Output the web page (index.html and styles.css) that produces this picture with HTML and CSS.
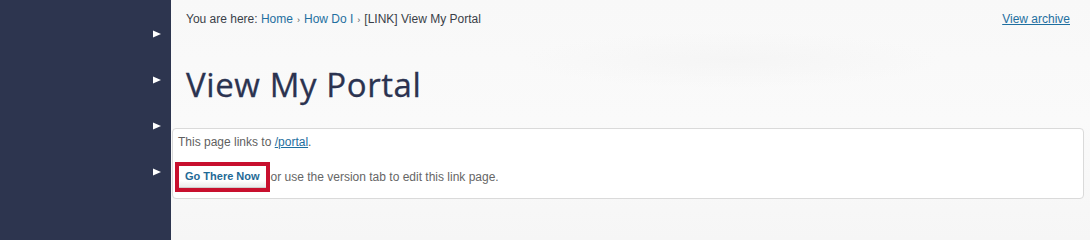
FILE: index.html
```html
<!DOCTYPE html>
<html>
<head>
<meta charset="utf-8">
<link rel="stylesheet" href="styles.css">
</head>
<body>
<div class="page">
  <nav class="sidebar">
    <svg class="arrow" width="8" height="8" viewBox="0 0 8 8"><path d="M0 0.5 L8 4 L0 7.5 Z" fill="#ffffff"/></svg>
    <svg class="arrow" width="8" height="8" viewBox="0 0 8 8"><path d="M0 0.5 L8 4 L0 7.5 Z" fill="#ffffff"/></svg>
    <svg class="arrow" width="8" height="8" viewBox="0 0 8 8"><path d="M0 0.5 L8 4 L0 7.5 Z" fill="#ffffff"/></svg>
    <svg class="arrow" width="8" height="8" viewBox="0 0 8 8"><path d="M0 0.5 L8 4 L0 7.5 Z" fill="#ffffff"/></svg>
  </nav>
  <main class="main">
    <div class="topbar">
      <div class="crumbs">You are here: <a href="#">Home</a><span class="sep">›</span><a href="#">How Do I</a><span class="sep">›</span>[LINK] View My Portal</div>
      <a class="archive" href="#">View archive</a>
    </div>
    <h1 class="title">View My Portal</h1>
    <div class="box">
      <p class="line1">This page links to <a href="#">/portal</a>.</p>
      <div class="line2">
        <span class="btn-wrap"><button class="btn">Go There Now</button></span>
        <span class="note">or use the version tab to edit this link page.</span>
      </div>
    </div>
  </main>
</div>
</body>
</html>
```

FILE: styles.css
```css
html, body {
  margin: 0;
  padding: 0;
  height: 100%;
}
body {
  font-family: "Liberation Sans", Arial, sans-serif;
  background: #f7f7f7;
  overflow: hidden;
}
.page {
  display: flex;
  min-height: 100vh;
}
.sidebar {
  width: 171px;
  flex: none;
  background: #2d354f;
  display: flex;
  flex-direction: column;
  align-items: flex-end;
  padding-top: 30px;
  padding-right: 10px;
  box-sizing: border-box;
  gap: 38px;
}
.arrow {
  display: block;
  flex: none;
}
.main {
  flex: 1;
  padding: 0 6px 0 1px;
  background:
    radial-gradient(ellipse 300px 40px at 560px 60px, rgba(238,238,238,0.35), rgba(255,255,255,0) 70%),
    linear-gradient(180deg, #f8f8f8 0%, #fafafa 50%, #f6f6f6 100%);
}
.topbar {
  display: flex;
  justify-content: space-between;
  align-items: baseline;
  padding: 12px 14px 0 14px;
  font-size: 12px;
  line-height: 14px;
}
.crumbs {
  color: #3a3f48;
}
.crumbs a {
  color: #1f6fa0;
  text-decoration: none;
}
.sep {
  font-size: 9px;
  color: #555;
  margin: 0 4px;
}
.archive {
  color: #1f6fa0;
  text-decoration: underline;
  font-size: 12px;
}
.title {
  margin: 38px 0 0 0;
  padding: 0 0 0 14px;
  font-family: "Open Sans", "Noto Sans", sans-serif;
  font-weight: 400;
  font-size: 33px;
  line-height: 40px;
  color: #2b3350;
  letter-spacing: 0.6px;
  -webkit-text-stroke: 0.3px #2b3350;
}
.box {
  margin-top: 23px;
  background: #ffffff;
  border: 1px solid #dadada;
  border-radius: 4px;
  padding: 6px 6px 4px 5px;
  height: 71px;
  box-sizing: border-box;
}
.line1 {
  margin: 0;
  font-size: 12px;
  line-height: 14px;
  color: #5f5f5f;
}
.line1 a {
  color: #1f6fa0;
  text-decoration: underline;
}
.line2 {
  display: flex;
  align-items: center;
  margin-top: 13px;
  gap: 1px;
}
.btn-wrap {
  display: inline-flex;
  border: 4px solid #c8102e;
  margin-left: -3px;
}
.btn {
  font-family: "Liberation Sans", Arial, sans-serif;
  font-weight: bold;
  font-size: 11px;
  color: #1f6a96;
  background: linear-gradient(180deg, #ffffff 0%, #ffffff 70%, #ececec 100%);
  border: none;
  border-bottom: 1px solid #cfcfcf;
  padding: 0 6px;
  height: 22px;
  line-height: 21px;
}
.note {
  font-size: 12px;
  color: #666666;
}
```
